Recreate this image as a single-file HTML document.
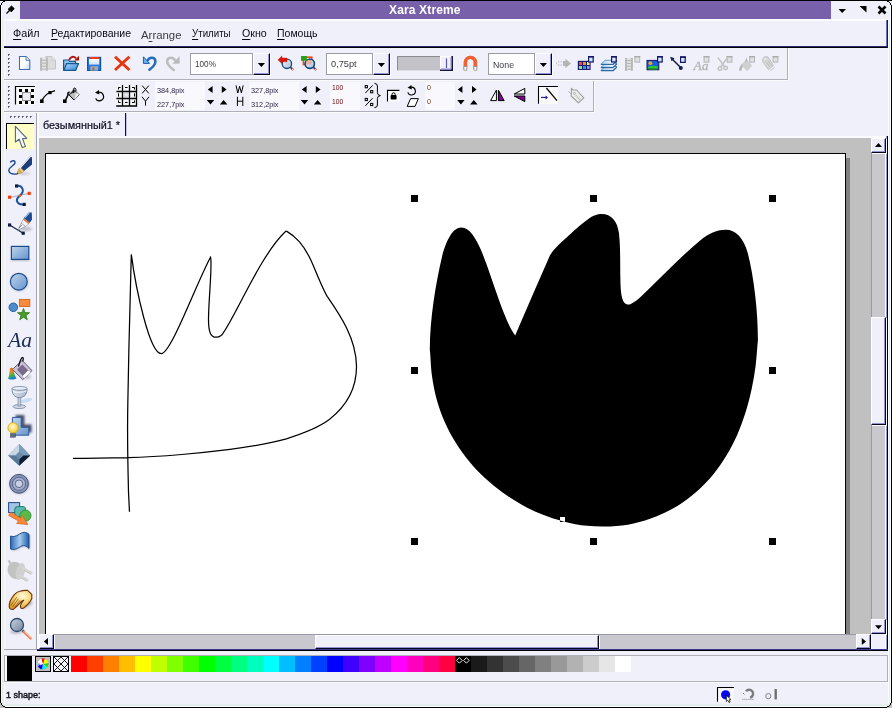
<!DOCTYPE html>
<html><head><meta charset="utf-8">
<style>
*{box-sizing:border-box;margin:0;padding:0}
html,body{width:892px;height:708px;overflow:hidden;background:#f0f0fa;font-family:"Liberation Sans",sans-serif;}
.a{position:absolute}
#win{position:absolute;left:0;top:0;width:892px;height:708px;background:#f0f0fa;overflow:hidden}
.t{position:absolute;white-space:nowrap;color:#000;transform-origin:0 0;line-height:1}
.menu{font-size:11px;top:28px;color:#0a0a14}
.menu u{text-decoration:underline;text-underline-offset:1.5px;text-decoration-thickness:1px}
.f{position:absolute;white-space:nowrap;font-size:7.5px;line-height:1;transform-origin:0 0;color:#2e2244}
svg{position:absolute;overflow:visible}
.cmb{position:absolute;background:#fff;border:1px solid #9c9ca4}
.btn{position:absolute;background:#f0f0fa;border-top:1px solid #fff;border-left:1px solid #fff;border-right:1px solid #06061c;border-bottom:1px solid #06061c;box-shadow:inset -1px -1px 0 #9494d4,1px 1px 0 #fbfbfe}
.gr{position:absolute;width:2px;height:2px;background:#50505a;box-shadow:1px 1px 0 #fff}
.sw{position:absolute;top:656px;width:16px;height:16px}
</style></head><body>
<div id="win">
<!-- FRAME -->
<div class="a" style="left:0;top:0;width:892px;height:1px;background:#000"></div>
<div class="a" style="left:0;top:0;width:1px;height:708px;background:#000"></div>
<div class="a" style="left:891px;top:0;width:1px;height:708px;background:#000"></div>
<div class="a" style="left:0;top:707px;width:892px;height:1px;background:#000"></div>
<div class="a" style="left:1px;top:1px;width:1px;height:706px;background:#f4fcfc"></div>
<div class="a" style="left:2px;top:20px;width:1px;height:686px;background:#e5edec"></div>
<div class="a" style="left:3px;top:20px;width:1px;height:684px;background:#e9f0ef"></div>
<div class="a" style="left:4px;top:20px;width:1px;height:684px;background:#fbfbfe"></div>
<div class="a" style="left:888px;top:20px;width:1px;height:686px;background:#f4fcfc"></div>
<div class="a" style="left:889px;top:20px;width:1px;height:686px;background:#e5edec"></div>
<div class="a" style="left:890px;top:1px;width:1px;height:706px;background:#f4fcfc"></div>
<div class="a" style="left:2px;top:704px;width:887px;height:2px;background:#e5edec"></div>
<div class="a" style="left:1px;top:706px;width:890px;height:1px;background:#f4fcfc"></div>
<svg style="left:0;top:0" width="892" height="708" viewBox="0 0 892 708" shape-rendering="crispEdges">
<rect x="0" y="1" width="1" height="1" fill="#eeeefa"/><rect x="891" y="1" width="1" height="1" fill="#eeeefa"/><rect x="0" y="2" width="1" height="1" fill="#eeeefa"/><rect x="891" y="2" width="1" height="1" fill="#eeeefa"/><rect x="0" y="3" width="1" height="1" fill="#eeeefa"/><rect x="891" y="3" width="1" height="1" fill="#eeeefa"/><rect x="0" y="4" width="1" height="1" fill="#eeeefa"/><rect x="891" y="4" width="1" height="1" fill="#eeeefa"/><rect x="1" y="1" width="1" height="1" fill="#eeeefa"/><rect x="890" y="1" width="1" height="1" fill="#eeeefa"/><rect x="1" y="2" width="1" height="1" fill="#eeeefa"/><rect x="890" y="2" width="1" height="1" fill="#eeeefa"/><rect x="2" y="1" width="1" height="1" fill="#eeeefa"/><rect x="889" y="1" width="1" height="1" fill="#eeeefa"/><rect x="1" y="3" width="1" height="1" fill="#000"/><rect x="890" y="3" width="1" height="1" fill="#000"/><rect x="1" y="4" width="1" height="1" fill="#000"/><rect x="890" y="4" width="1" height="1" fill="#000"/><rect x="2" y="2" width="1" height="1" fill="#000"/><rect x="889" y="2" width="1" height="1" fill="#000"/><rect x="3" y="1" width="1" height="1" fill="#000"/><rect x="888" y="1" width="1" height="1" fill="#000"/><rect x="4" y="1" width="1" height="1" fill="#000"/><rect x="887" y="1" width="1" height="1" fill="#000"/><rect x="0" y="703" width="1" height="1" fill="#c0c0c0"/><rect x="891" y="703" width="1" height="1" fill="#c0c0c0"/><rect x="0" y="704" width="1" height="1" fill="#c0c0c0"/><rect x="891" y="704" width="1" height="1" fill="#c0c0c0"/><rect x="0" y="705" width="1" height="1" fill="#c0c0c0"/><rect x="891" y="705" width="1" height="1" fill="#c0c0c0"/><rect x="0" y="706" width="1" height="1" fill="#c0c0c0"/><rect x="891" y="706" width="1" height="1" fill="#c0c0c0"/><rect x="0" y="707" width="1" height="1" fill="#c0c0c0"/><rect x="891" y="707" width="1" height="1" fill="#c0c0c0"/><rect x="1" y="705" width="1" height="1" fill="#c0c0c0"/><rect x="890" y="705" width="1" height="1" fill="#c0c0c0"/><rect x="1" y="706" width="1" height="1" fill="#c0c0c0"/><rect x="890" y="706" width="1" height="1" fill="#c0c0c0"/><rect x="1" y="707" width="1" height="1" fill="#c0c0c0"/><rect x="890" y="707" width="1" height="1" fill="#c0c0c0"/><rect x="2" y="706" width="1" height="1" fill="#c0c0c0"/><rect x="889" y="706" width="1" height="1" fill="#c0c0c0"/><rect x="2" y="707" width="1" height="1" fill="#c0c0c0"/><rect x="889" y="707" width="1" height="1" fill="#c0c0c0"/><rect x="3" y="707" width="1" height="1" fill="#c0c0c0"/><rect x="888" y="707" width="1" height="1" fill="#c0c0c0"/><rect x="4" y="707" width="1" height="1" fill="#c0c0c0"/><rect x="887" y="707" width="1" height="1" fill="#c0c0c0"/><rect x="1" y="703" width="1" height="1" fill="#000"/><rect x="890" y="703" width="1" height="1" fill="#000"/><rect x="1" y="704" width="1" height="1" fill="#000"/><rect x="890" y="704" width="1" height="1" fill="#000"/><rect x="2" y="705" width="1" height="1" fill="#000"/><rect x="889" y="705" width="1" height="1" fill="#000"/><rect x="3" y="706" width="1" height="1" fill="#000"/><rect x="888" y="706" width="1" height="1" fill="#000"/><rect x="4" y="706" width="1" height="1" fill="#000"/><rect x="887" y="706" width="1" height="1" fill="#000"/>
</svg>
<!-- TITLE -->
<div class="a" style="left:20px;top:1px;width:811px;height:18px;background:#7860aa"></div>
<div class="t" style="left:389px;top:4px;font-size:12px;font-weight:bold;color:#fff;letter-spacing:0.15px">Xara Xtreme</div>
<div class="a" style="left:4px;top:19px;width:884px;height:2px;background:#fbfbfe"></div>
<svg style="left:0;top:0" width="892" height="20">
 <path d="M6.5 13.5 L10 10" stroke="#000" stroke-width="1.3" fill="none"/>
 <path d="M8.2 9.2 L11.5 6 L14.2 8.6 L11.2 12 L10.6 10.4 Z" fill="#000" stroke="#000" stroke-width="1"/>
 <path d="M838.5 9 L846 9 L842.2 13 Z" fill="#000"/>
 <path d="M859.5 6 L866.5 6 L866.5 12.5 Z" fill="#000"/>
 <path d="M878.5 6.5 L885.5 13.5 M885.5 6.5 L878.5 13.5" stroke="#000" stroke-width="2.6" fill="none"/>
</svg>
<!-- MENU -->
<div class="a" style="left:4px;top:46px;width:884px;height:1px;background:#2a2a6a"></div>
<div class="a" style="left:4px;top:47px;width:884px;height:1px;background:#000"></div>
<div class="a" style="left:887px;top:20px;width:1px;height:28px;background:#1a1a40"></div>
<div class="a" style="left:886px;top:20px;width:1px;height:26px;background:#7070c0"></div>
<div class="t menu" style="left:13px;transform:scaleX(0.98)"><u>Ф</u>айл</div>
<div class="t menu" style="left:50.5px;transform:scaleX(0.955)"><u>Р</u>едактирование</div>
<div class="t menu" style="left:141px;top:30px;color:#3c3c44;font-size:11.5px;transform:scaleX(0.99)">A<u>r</u>range</div>
<div class="t menu" style="left:192.3px;transform:scaleX(0.883)"><u>У</u>тилиты</div>
<div class="t menu" style="left:242px;transform:scaleX(0.968)"><u>О</u>кно</div>
<div class="t menu" style="left:277.3px;transform:scaleX(0.955)"><u>П</u>омощь</div>
<!-- TOOLBAR 1 -->
<div class="a" style="left:4px;top:48px;width:784px;height:32px;border-right:1px solid #b0b0b8;border-bottom:1px solid #b0b0b8"></div>
<div class="a" style="left:4px;top:80px;width:784px;height:1px;background:#fbfbfe"></div>
<div class="a" style="left:788px;top:48px;width:1px;height:32px;background:#fbfbfe"></div>
<svg style="left:0;top:0" width="892" height="120" viewBox="0 0 892 120">
<defs>
 <linearGradient id="gdoc" x1="0" y1="0" x2="1" y2="1"><stop offset="0" stop-color="#fff"/><stop offset="0.5" stop-color="#fff"/><stop offset="1" stop-color="#c4dcf6"/></linearGradient>
 <linearGradient id="gfold" x1="0" y1="0" x2="1" y2="1"><stop offset="0" stop-color="#b8dcfa"/><stop offset="1" stop-color="#2a84dc"/></linearGradient>
 <linearGradient id="gsave" x1="0" y1="0" x2="0" y2="1"><stop offset="0" stop-color="#fff"/><stop offset="1" stop-color="#c8e0fa"/></linearGradient>
 <linearGradient id="gmag" x1="0" y1="0" x2="1" y2="1"><stop offset="0" stop-color="#eef2f8"/><stop offset="1" stop-color="#a8c0dc"/></linearGradient>
 <linearGradient id="gmgn" x1="0" y1="0" x2="1" y2="0"><stop offset="0" stop-color="#f4825a"/><stop offset="0.5" stop-color="#f05a28"/><stop offset="1" stop-color="#e04818"/></linearGradient>
</defs>
<!-- grippers -->
<g shape-rendering="crispEdges"><rect x="8" y="54" width="1" height="1" fill="#50505c"/><rect x="9" y="54" width="1" height="1" fill="#80808c"/><rect x="8" y="55" width="1" height="1" fill="#787884"/><rect x="9" y="55" width="1" height="1" fill="#fff"/><rect x="8" y="58" width="1" height="1" fill="#50505c"/><rect x="9" y="58" width="1" height="1" fill="#80808c"/><rect x="8" y="59" width="1" height="1" fill="#787884"/><rect x="9" y="59" width="1" height="1" fill="#fff"/><rect x="8" y="62" width="1" height="1" fill="#50505c"/><rect x="9" y="62" width="1" height="1" fill="#80808c"/><rect x="8" y="63" width="1" height="1" fill="#787884"/><rect x="9" y="63" width="1" height="1" fill="#fff"/><rect x="8" y="66" width="1" height="1" fill="#50505c"/><rect x="9" y="66" width="1" height="1" fill="#80808c"/><rect x="8" y="67" width="1" height="1" fill="#787884"/><rect x="9" y="67" width="1" height="1" fill="#fff"/><rect x="8" y="70" width="1" height="1" fill="#50505c"/><rect x="9" y="70" width="1" height="1" fill="#80808c"/><rect x="8" y="71" width="1" height="1" fill="#787884"/><rect x="9" y="71" width="1" height="1" fill="#fff"/><rect x="8" y="74" width="1" height="1" fill="#50505c"/><rect x="9" y="74" width="1" height="1" fill="#80808c"/><rect x="8" y="75" width="1" height="1" fill="#787884"/><rect x="9" y="75" width="1" height="1" fill="#fff"/></g>
<!-- new -->
<path d="M19.5 56.5 H26 L29.8 60.3 V69.5 H19.5 Z" fill="url(#gdoc)" stroke="#3f72ac" stroke-width="1.1"/>
<path d="M26 56.5 V60.3 H29.8" fill="#e4eefa" stroke="#3f72ac" stroke-width="0.9"/>
<!-- film/doc disabled -->
<path d="M45.8 56.5 H51.8 L55.5 60 V69 H45.8 Z" fill="#dcdcdc" stroke="#c4c4c4" stroke-width="1"/>
<path d="M51.8 56.5 V60 H55.5" fill="#ececec" stroke="#c4c4c4" stroke-width="0.8"/>
<rect x="40.2" y="57.8" width="7.6" height="13" fill="#e2e2e2"/>
<rect x="40.2" y="57.8" width="1.8" height="13" fill="#acacac"/><rect x="46" y="57.8" width="1.8" height="13" fill="#acacac"/>
<g stroke="#a8a8a8" stroke-width="0.8"><path d="M42 60.3H46M42 63.2H46M42 66.1H46M42 69H46"/></g>
<g fill="#d8d8d8"><rect x="40.6" y="58.8" width="1" height="1"/><rect x="40.6" y="61" width="1" height="1"/><rect x="40.6" y="63.2" width="1" height="1"/><rect x="40.6" y="65.4" width="1" height="1"/><rect x="40.6" y="67.6" width="1" height="1"/><rect x="40.6" y="69.6" width="1" height="1"/>
<rect x="46.4" y="58.8" width="1" height="1"/><rect x="46.4" y="61" width="1" height="1"/><rect x="46.4" y="63.2" width="1" height="1"/><rect x="46.4" y="65.4" width="1" height="1"/><rect x="46.4" y="67.6" width="1" height="1"/><rect x="46.4" y="69.6" width="1" height="1"/></g>
<!-- open -->
<path d="M63.6 70.4 V60 H68.5 L69.6 61.4 H75.6 V63.6" fill="#8cc0ee" stroke="#14588c" stroke-width="1.2" stroke-linejoin="round"/>
<path d="M63.8 70.4 L66.6 63.6 H78.6 L75.6 70.4 Z" fill="url(#gfold)" stroke="#14588c" stroke-width="1.2" stroke-linejoin="round"/>
<path d="M69.2 60 C70.4 56.6 73.6 55.8 76 58.2" fill="none" stroke="#b01c14" stroke-width="2"/>
<path d="M74.2 60.6 L79 60.6 L79 55.8 Z" fill="#b01408"/>
<!-- save -->
<rect x="87.6" y="57.4" width="13" height="13" fill="#2a7ae0" stroke="#14569c" stroke-width="1.2"/>
<rect x="89" y="59" width="10.2" height="5.6" fill="url(#gsave)"/>
<rect x="89" y="57" width="10.2" height="2" fill="#ee3a24"/>
<rect x="90.4" y="66.2" width="7.6" height="4.4" fill="#a8a8a8"/>
<rect x="92.4" y="67.4" width="2" height="3.2" fill="#7c7c7c"/>
<!-- delete X -->
<path d="M115 56.8 L129.4 70 M129.4 56.8 L115 70" stroke="#e8340e" stroke-width="2.9" fill="none"/>
<!-- undo -->
<path d="M147.6 60.4 C149.5 56.6 155.6 56.4 155.4 61.8 C155.2 65.4 152.2 67.6 149.4 69.8" fill="none" stroke="#256cbc" stroke-width="2.5" stroke-linecap="round"/>
<path d="M143.4 56.8 V63.4 H149.6 Z" fill="#6cb2f2" stroke="#1c5eac" stroke-width="1" stroke-linejoin="round"/>
<!-- redo -->
<path d="M175 60.4 C173.1 56.6 167 56.4 167.2 61.8 C167.4 65.4 170.4 67.6 173.8 70" fill="none" stroke="#bcbcbc" stroke-width="2.5" stroke-linecap="round"/>
<path d="M179.4 56.6 V63.6 H172.8 Z" fill="#b8b8b8" stroke="#c4c4c4" stroke-width="0.6"/>
<!-- zoom prev -->
<circle cx="286.9" cy="63.8" r="4.7" fill="url(#gmag)" stroke="#1c4878" stroke-width="1.3"/>
<path d="M290.4 67.2 L292.6 69.4" stroke="#1c4878" stroke-width="1.8"/>
<path d="M291.8 68.6 L293.2 70" stroke="#e8402c" stroke-width="2.2"/>
<rect x="292" y="68.9" width="1" height="1" fill="#fff"/>
<path d="M278 59.8 L282 55.9 V58 H287 V61.8 H282 V63.8 Z" fill="#d81808" stroke="#c01408" stroke-width="0.4"/>
<!-- zoom sel -->
<rect x="303.4" y="57.2" width="8.4" height="7.4" fill="#fff" stroke="#f04818" stroke-width="1.6"/>
<circle cx="309.8" cy="63.8" r="4.7" fill="url(#gmag)" stroke="#1c4878" stroke-width="1.3"/>
<path d="M305.6 59.6 H311.6 V64.4 H305.6 Z" fill="#f0a088" opacity="0.75"/>
<circle cx="309.8" cy="63.8" r="4.7" fill="none" stroke="#1c4878" stroke-width="1.3"/>
<rect x="301" y="56" width="5.8" height="4.8" fill="#28a018"/>
<path d="M313.3 67.2 L315.5 69.4" stroke="#1c4878" stroke-width="1.8"/>
<path d="M314.7 68.6 L316.1 70" stroke="#e8402c" stroke-width="2.2"/>
<rect x="314.9" y="68.9" width="1" height="1" fill="#fff"/>
<!-- slider -->
<rect x="397" y="56" width="56" height="14.4" fill="#c2c2c8"/>
<path d="M397.5 70.4 V56.5 H453" fill="none" stroke="#8c8c94" stroke-width="1"/>
<rect x="440" y="56" width="13" height="14.4" fill="#f0f0fa"/>
<path d="M440.5 70 V56.5 H452" fill="none" stroke="#fff" stroke-width="1"/>
<path d="M452.2 56 V70.2 H440" fill="none" stroke="#16163c" stroke-width="1.6"/>
<path d="M451 57 V69 H441" fill="none" stroke="#8a8ad0" stroke-width="1"/>
<path d="M446.5 58.5 V68" stroke="#5858a0" stroke-width="1.2"/>
<!-- magnet -->
<path d="M465.4 69.6 V62.4 A5 5 0 0 1 475.4 62.4 V69.6" fill="none" stroke="url(#gmgn)" stroke-width="3.4"/>
<path d="M465.4 69.6 V62.4 A5 5 0 0 1 475.4 62.4 V69.6" fill="none" stroke="#f06030" stroke-width="3.4"/>
<rect x="464" y="66.6" width="2.8" height="3.6" fill="#fff" stroke="#8c8c8c" stroke-width="0.7"/>
<rect x="474" y="66.6" width="2.8" height="3.6" fill="#fff" stroke="#8c8c8c" stroke-width="0.7"/>
<!-- arrow disabled -->
<path d="M563 61 H565.4 V58.8 L571 63.5 L565.4 68.2 V66 H563 Z" fill="#b4b4b4"/>
<g fill="#c8c8c8"><rect x="560.4" y="61" width="1.6" height="1.4"/><rect x="560.4" y="64.4" width="1.6" height="1.4"/><rect x="558" y="61" width="1.4" height="1.4"/><rect x="558" y="64.4" width="1.4" height="1.4"/><rect x="556" y="62.6" width="1.2" height="1.6"/></g>
</svg>
<!-- combos -->
<div class="cmb" style="left:190px;top:53px;width:63px;height:22px"></div>
<div class="btn" style="left:253px;top:53px;width:17px;height:22px"></div>
<div class="f" style="left:195px;top:61px;font-size:8.2px;color:#3c3c46">100%</div>
<div class="cmb" style="left:326px;top:53px;width:47px;height:22px"></div>
<div class="btn" style="left:373px;top:53px;width:17px;height:22px"></div>
<div class="f" style="left:331px;top:61px;font-size:8.2px;color:#3c3c46;transform:scaleX(1.127)">0,75pt</div>
<div class="cmb" style="left:488px;top:53px;width:47px;height:22px"></div>
<div class="btn" style="left:535px;top:53px;width:17px;height:22px"></div>
<div class="f" style="left:493px;top:61px;font-size:8.4px;color:#3c3c46;transform:scaleX(1.05)">None</div>
<svg style="left:0;top:0" width="892" height="120" viewBox="0 0 892 120">
<path d="M257.8 63 H265 L261.4 67 Z M377.8 63 H385 L381.4 67 Z M539.8 63 H547 L543.4 67 Z" fill="#000"/>
</svg>
<svg style="left:0;top:0" width="892" height="120" viewBox="0 0 892 120">
<defs>
 <linearGradient id="gbox" x1="0" y1="0" x2="1" y2="1"><stop offset="0" stop-color="#fff"/><stop offset="1" stop-color="#a8d0f8"/></linearGradient>
 <linearGradient id="glay2" x1="0" y1="0" x2="1" y2="0"><stop offset="0" stop-color="#a8d4f8"/><stop offset="0.6" stop-color="#e8f4fe"/><stop offset="1" stop-color="#ffffff"/></linearGradient>
 <linearGradient id="glay" x1="0" y1="0" x2="1" y2="0"><stop offset="0" stop-color="#dcecfc"/><stop offset="1" stop-color="#5c9cdc"/></linearGradient>
 <g id="wbox"><rect x="0.6" y="0.6" width="4.6" height="5.4" fill="url(#gbox)" stroke="#16166a" stroke-width="1.2"/><rect x="0" y="0" width="5.8" height="1.6" fill="#16166a"/></g>
 <g id="gbx"><rect x="0.5" y="0.5" width="4.8" height="5.6" fill="#e0e0e0" stroke="#b4b4b4" stroke-width="1"/><rect x="0" y="0" width="5.8" height="1.5" fill="#acacac"/></g>
</defs>
<!-- colour gallery -->
<rect x="577.8" y="60.8" width="12.8" height="9.2" fill="#1c1c6c"/>
<rect x="579" y="62" width="3" height="3" fill="#f04848"/><rect x="583" y="62" width="3" height="3" fill="#f89020"/><rect x="587" y="62" width="2.6" height="3" fill="#f4f080"/>
<rect x="579" y="66" width="3" height="3" fill="#88e888"/><rect x="583" y="66" width="3" height="3" fill="#10a0f8"/><rect x="587" y="66" width="2.6" height="3" fill="#9c8cf0"/>
<use href="#wbox" x="588" y="56"/>
<!-- layer gallery -->
<g stroke-linejoin="round">
<path d="M601 70.4 L605.2 66.5 H617 L613 70.4 Z" fill="url(#glay2)" stroke="#3474b4" stroke-width="0.7"/>
<path d="M600.8 70.7 H613 L616.8 67.1" fill="none" stroke="#2c68a8" stroke-width="1.2"/>
<path d="M601 67.3 L605.2 63.4 H617 L613 67.3 Z" fill="url(#glay2)" stroke="#3474b4" stroke-width="0.7"/>
<path d="M600.8 67.6 H613 L616.8 64.0" fill="none" stroke="#2c68a8" stroke-width="1.2"/>
<path d="M601 64.2 L605.2 60.3 H617 L613 64.2 Z" fill="url(#glay2)" stroke="#3474b4" stroke-width="0.7"/>
<path d="M600.8 64.5 H613 L616.8 60.9" fill="none" stroke="#2c68a8" stroke-width="1.2"/>
</g>
<use href="#wbox" x="611" y="56"/>
<!-- film disabled -->
<rect x="625" y="58" width="7.8" height="12.6" fill="#e2e2e2"/>
<rect x="625" y="58" width="1.8" height="12.6" fill="#acacac"/><rect x="631" y="58" width="1.8" height="12.6" fill="#acacac"/>
<g stroke="#a8a8a8" stroke-width="0.8"><path d="M626.8 60.5H631M626.8 63.4H631M626.8 66.3H631M626.8 69.2H631"/></g>
<g fill="#d8d8d8"><rect x="625.4" y="59" width="1" height="1"/><rect x="625.4" y="61.2" width="1" height="1"/><rect x="625.4" y="63.4" width="1" height="1"/><rect x="625.4" y="65.6" width="1" height="1"/><rect x="625.4" y="67.8" width="1" height="1"/>
<rect x="631.4" y="59" width="1" height="1"/><rect x="631.4" y="61.2" width="1" height="1"/><rect x="631.4" y="63.4" width="1" height="1"/><rect x="631.4" y="65.6" width="1" height="1"/><rect x="631.4" y="67.8" width="1" height="1"/></g>
<use href="#gbx" x="634.4" y="56"/>
<!-- bitmap gallery -->
<rect x="647" y="60.4" width="11.8" height="9.4" fill="#1860d8" stroke="#14146a" stroke-width="1"/>
<ellipse cx="653" cy="67.6" rx="5" ry="1.9" fill="#30c830"/>
<rect x="647.5" y="68.4" width="10.8" height="1.2" fill="#108020"/>
<circle cx="650.4" cy="63.2" r="1.9" fill="#f8a020"/>
<use href="#wbox" x="657" y="56"/>
<!-- line gallery -->
<path d="M671.6 58.4 L680.6 67.6" stroke="#101c54" stroke-width="1.5"/>
<path d="M670.2 56.8 L674.6 58.2 L671.6 61.2 Z" fill="#101c54"/>
<circle cx="680.8" cy="68" r="2" fill="#101c54"/>
<use href="#wbox" x="680" y="56.4"/>
<!-- Aa disabled -->
<text x="693.4" y="70.4" font-family="Liberation Serif" font-style="italic" font-size="13.5" fill="#b4b4b4" stroke="#b4b4b4" stroke-width="0.3">Aa</text>
<use href="#gbx" x="703.6" y="56"/>
<!-- scissors disabled -->
<g stroke="#c0c0c0" fill="none" stroke-width="1.4"><path d="M718 57.6 L724.6 67 M726.4 59 L720.6 67"/><circle cx="720" cy="68.6" r="1.8"/><circle cx="725.6" cy="68" r="1.8"/></g>
<use href="#gbx" x="726.6" y="56"/>
<!-- bucket disabled -->
<path d="M739 70.7 C739.4 67 740.6 65 742.4 63.6 L744 65.4 C742.6 66.6 741.8 68.4 741.6 70.7 Z" fill="#b8b8b8"/>
<path d="M746.3 59.9 L751.8 65.5 L747.2 70.7 L741.6 65 Z" fill="#d0d0d0" stroke="#c4c4c4" stroke-width="0.6"/>
<path d="M745.4 62 L746.2 57.2 L747.4 61" fill="#b0b0b0"/>
<use href="#gbx" x="749.2" y="56"/>
<!-- tag disabled -->
<path d="M770 70.4 L774.4 66.4 L775 67.4 L770.8 71.2 Z" fill="#d0d0d4"/>
<path d="M763 58.4 L764.6 56.6 L768 57 L773.4 65.4 L768.6 69.8 L762.6 61.6 Z" fill="#d8d8d8" stroke="#bcbcbc" stroke-width="0.9" stroke-linejoin="round"/>
<path d="M766 61.6 L770 67.4 M768 60.4 L771.8 66" stroke="#b8b8b8" stroke-width="0.9"/>
<circle cx="765.2" cy="59" r="0.8" fill="#f4f4f4"/>
<use href="#gbx" x="772.6" y="56"/>
</svg>
<!-- TOOLBAR 2 -->
<div class="a" style="left:4px;top:81px;width:590px;height:31px;border-right:1px solid #b0b0b8;border-bottom:1px solid #b0b0b8"></div>
<div class="a" style="left:4px;top:112px;width:591px;height:1px;background:#fbfbfe"></div>
<div class="a" style="left:594px;top:81px;width:1px;height:31px;background:#fbfbfe"></div>
<!-- fields -->
<div class="a" style="left:155px;top:82px;width:50px;height:28px;background:#f9f9fd"></div>
<div class="a" style="left:249px;top:82px;width:50px;height:28px;background:#f9f9fd"></div>
<div class="a" style="left:330px;top:82px;width:30px;height:28px;background:#f9f9fd"></div>
<div class="a" style="left:425px;top:82px;width:30px;height:28px;background:#f9f9fd"></div>
<div class="f" style="left:157px;top:86.5px;transform:scaleX(.97)">384,8pix</div>
<div class="f" style="left:157px;top:100.5px;transform:scaleX(.97)">227,7pix</div>
<div class="f" style="left:251px;top:86.5px;transform:scaleX(.97)">327,8pix</div>
<div class="f" style="left:251px;top:100.5px;transform:scaleX(.97)">312,2pix</div>
<div class="f" style="left:332px;top:85.1px;font-size:7.1px;transform:scaleX(.95);color:#6a0c12">100</div>
<div class="f" style="left:332px;top:98.9px;font-size:7.1px;transform:scaleX(.95);color:#6a0c12">100</div>
<div class="f" style="left:427px;top:85.1px;font-size:7.1px;color:#6a3a10">0</div>
<div class="f" style="left:427px;top:98.9px;font-size:7.1px;color:#6a3a10">0</div>
<svg style="left:0;top:0" width="892" height="120" viewBox="0 0 892 120">
<!-- gripper -->
<g shape-rendering="crispEdges"><rect x="8" y="86" width="1" height="1" fill="#50505c"/><rect x="9" y="86" width="1" height="1" fill="#80808c"/><rect x="8" y="87" width="1" height="1" fill="#787884"/><rect x="9" y="87" width="1" height="1" fill="#fff"/><rect x="8" y="90" width="1" height="1" fill="#50505c"/><rect x="9" y="90" width="1" height="1" fill="#80808c"/><rect x="8" y="91" width="1" height="1" fill="#787884"/><rect x="9" y="91" width="1" height="1" fill="#fff"/><rect x="8" y="94" width="1" height="1" fill="#50505c"/><rect x="9" y="94" width="1" height="1" fill="#80808c"/><rect x="8" y="95" width="1" height="1" fill="#787884"/><rect x="9" y="95" width="1" height="1" fill="#fff"/><rect x="8" y="98" width="1" height="1" fill="#50505c"/><rect x="9" y="98" width="1" height="1" fill="#80808c"/><rect x="8" y="99" width="1" height="1" fill="#787884"/><rect x="9" y="99" width="1" height="1" fill="#fff"/><rect x="8" y="102" width="1" height="1" fill="#50505c"/><rect x="9" y="102" width="1" height="1" fill="#80808c"/><rect x="8" y="103" width="1" height="1" fill="#787884"/><rect x="9" y="103" width="1" height="1" fill="#fff"/><rect x="8" y="106" width="1" height="1" fill="#50505c"/><rect x="9" y="106" width="1" height="1" fill="#80808c"/><rect x="8" y="107" width="1" height="1" fill="#787884"/><rect x="9" y="107" width="1" height="1" fill="#fff"/></g>
<!-- icon1 bounds handles (pressed) -->
<rect x="15" y="86" width="20" height="19" fill="#fafafd"/>
<path d="M15.5 104.5 V86.5 H35" fill="none" stroke="#000" stroke-width="1.2"/>
<rect x="22.5" y="92.5" width="8" height="8" fill="#ececf4" stroke="#8c8c8c" stroke-width="1"/>
<g fill="#000"><rect x="19" y="89" width="3" height="3"/><rect x="25" y="89" width="3" height="3"/><rect x="31" y="89" width="3" height="3"/>
<rect x="19" y="95" width="3" height="3"/><rect x="31" y="95" width="3" height="3"/>
<rect x="19" y="101" width="3" height="3"/><rect x="25" y="101" width="3" height="3"/><rect x="31" y="101" width="3" height="3"/></g>
<!-- icon2 curve -->
<path d="M42 100.6 Q44.6 95 49.6 92.8 L55 90.6" fill="none" stroke="#000" stroke-width="1.2"/>
<rect x="40" y="99.4" width="3.6" height="3.6" fill="#000"/><rect x="48.4" y="91" width="3.2" height="3.2" fill="#000"/>
<!-- icon3 bucket -->
<rect x="63" y="99.4" width="3.6" height="3.6" fill="#000"/>
<path d="M65.6 100 L68 95 Q67.4 92 69.6 92.4" fill="none" stroke="#000" stroke-width="1.6"/>
<path d="M74 89.6 L79 94.8 L74 100 L69 94.8 Z" fill="#c0c0c0" stroke="#000" stroke-width="1"/>
<path d="M74.2 100 L79 94.8 L76.4 92.2 Z" fill="#f0f0f0"/>
<path d="M69.6 94.4 L74 89.8 L76 91.8" fill="#404040" stroke="none"/>
<path d="M73.4 93 V89.4 Q73.6 87.6 75 88 Q76.4 88.6 76 91" fill="none" stroke="#000" stroke-width="0.9"/>
<!-- icon4 rotate -->
<path d="M98.4 92.4 A4.2 4.2 0 1 1 95.6 98.4" fill="none" stroke="#000" stroke-width="1.2"/>
<path d="M95 92.8 L99 90 L99.4 94.6 Z" fill="#000"/>
<!-- icon5 grid -->
<rect x="116.4" y="85" width="20" height="20.4" fill="#f6f6fa"/>
<path d="M136.5 85 V106 H116.2 M122.5 85 V105.6 M129.5 85 V105.6 M116.4 91.5 H136.6 M116.4 98.5 H136.6" fill="none" stroke="#000" stroke-width="1.3"/>
<g fill="none" stroke="#000" stroke-width="1"><path d="M118.5 89.5 V87.5 H120.6 M125 87.5 H127.6 M132 87.5 H134.5 V89.5 M118.5 93.4 V96.6 M134.5 93.4 V96.6 M118.5 100.4 V102.5 H120.6 M125 102.5 H127.6 M132 102.5 H134.5 V100.4"/></g>
<rect x="124.2" y="93" width="4.2" height="4" fill="#e8e8f0" stroke="#b8b8c0" stroke-width="0.6"/>
<!-- X Y W H -->
<g fill="none" stroke="#000" stroke-width="1"><path d="M142.2 85.6 L148.8 93.4 M148.8 85.6 L142.2 93.4"/><path d="M142 96.8 L145.5 101.2 L149 96.8 M145.5 101.2 V105.6"/>
<path d="M236 85.4 L237.8 93 L239.6 86.4 L241.4 93 L243.2 85.4"/><path d="M237.4 96.8 V106 M242.8 96.8 V106 M237.4 101.2 H242.8"/></g>
<!-- arrows -->
<g fill="#000">
<path d="M212.6 86 V93 L207.8 89.5 Z M221.8 86 V93 L226.6 89.5 Z M206.8 100 H214.2 L210.5 104.4 Z M219.8 104.4 H227.4 L223.6 100 Z"/>
<path d="M306.6 86 V93 L301.8 89.5 Z M315.8 86 V93 L320.6 89.5 Z M300.8 100 H308.2 L304.5 104.4 Z M313.8 104.4 H321.4 L317.6 100 Z"/>
<path d="M462.4 86 V93 L457.8 89.5 Z M472 86 V93 L476.6 89.5 Z M457.2 100 H464.6 L460.9 104.4 Z M470 104.4 H477.6 L473.8 100 Z"/>
</g>
<!-- percent + brace -->
<g fill="none" stroke="#000" stroke-width="1"><path d="M365.4 93 L372.6 85.4 M365.4 105.8 L372.6 98.2"/><rect x="365.2" y="85.6" width="2.2" height="2.2"/><rect x="370.6" y="90.6" width="2.2" height="2.2"/><rect x="365.2" y="98.4" width="2.2" height="2.2"/><rect x="370.6" y="103.4" width="2.2" height="2.2"/>
<path d="M374.4 83.4 Q377.4 83.4 377.4 86 V92.6 Q377.4 95.4 380.4 95.6 Q377.4 95.8 377.4 98.6 V105 Q377.4 107.6 374.4 107.6"/></g>
<!-- lock (pressed) -->
<rect x="387" y="90" width="12.6" height="11.6" fill="#fafafd"/>
<path d="M387.5 101.4 V90.4 H399.4" fill="none" stroke="#000" stroke-width="1.1"/>
<rect x="390.6" y="95" width="6" height="4.6" rx="1" fill="#000"/><path d="M392 95.4 V94.4 A1.6 1.6 0 0 1 395.2 94.4 V95.4" fill="none" stroke="#000" stroke-width="1"/>
<!-- rotate small -->
<path d="M411 87.2 A3.9 3.9 0 1 1 407.8 92.4" fill="none" stroke="#000" stroke-width="1.1"/>
<path d="M407.6 87.8 L411.4 85 L411.8 89.4 Z" fill="#000"/>
<!-- shear -->
<path d="M407.2 106.4 L410.6 98.6 H418.4 L415 106.4 Z" fill="#fff" stroke="#000" stroke-width="1"/>
<!-- flip H -->
<path d="M496.4 90.2 V100.6 H490.6 Z" fill="#fff" stroke="#000" stroke-width="1"/>
<path d="M498.4 90.2 V100.6 H504.2 Z" fill="#800090" stroke="#000" stroke-width="1"/>
<!-- flip V -->
<path d="M524.8 88.4 V94 H514.2 Z" fill="#fff" stroke="#000" stroke-width="1"/>
<path d="M524.8 101.6 V96 H514.2 Z" fill="#800090" stroke="#000" stroke-width="1"/>
<!-- pressed btn arrow/line -->
<rect x="538" y="86" width="20" height="18" fill="#fafafd"/>
<path d="M538.5 103.8 V86.5 H558" fill="none" stroke="#000" stroke-width="1.1"/>
<path d="M546.4 88 L557 100.6" stroke="#000" stroke-width="1.2"/>
<path d="M541 97.4 H547" stroke="#1818a0" stroke-width="1.1"/><path d="M545.6 95.4 L548 97.4 L545.6 99.4 Z" fill="#1818a0"/>
<!-- tag disabled -->
<path d="M568.4 91.4 L571 94" stroke="#b0b0b0" stroke-width="0.9"/>
<path d="M571.4 88.2 L573 90 L576.6 90 L583.8 97.8 L578.4 102.8 L571.2 96 Z" fill="#ececec" stroke="#9c9c9c" stroke-width="1.1" stroke-linejoin="round"/>
<path d="M575.8 95.4 L580 99.8" stroke="#b8b8b8" stroke-width="2" stroke-dasharray="1 0.8"/>
<circle cx="574.4" cy="93.4" r="1" fill="#fff" stroke="#9c9c9c" stroke-width="0.8"/>
</svg>
<!-- LEFT TOOLBAR -->
<div class="a" style="left:36px;top:113px;width:1px;height:537px;background:#a4a4ac"></div>
<div class="a" style="left:37px;top:113px;width:2px;height:537px;background:#fbfbfe"></div>
<div class="a" style="left:4px;top:649px;width:33px;height:1px;background:#a4a4ac"></div>
<div class="a" style="left:6px;top:123px;width:28px;height:26px;background:#ffffc6;border-top:1px solid #000;border-left:1px solid #000"></div>
<svg style="left:0;top:0" width="60" height="708" viewBox="0 0 60 708">
<defs>
<linearGradient id="lb" x1="0" y1="0" x2="1" y2="1"><stop offset="0" stop-color="#c0d4ec"/><stop offset="1" stop-color="#6494cc"/></linearGradient>
<linearGradient id="lflag" x1="0" y1="0" x2="1" y2="0"><stop offset="0" stop-color="#2c6cb8"/><stop offset="0.5" stop-color="#a8ccf0"/><stop offset="1" stop-color="#1c5ca8"/></linearGradient>
<radialGradient id="lbulb" cx="0.45" cy="0.4" r="0.6"><stop offset="0" stop-color="#fffce0"/><stop offset="1" stop-color="#f4cc20"/></radialGradient>
<linearGradient id="lhand" x1="0" y1="0" x2="0.6" y2="1"><stop offset="0" stop-color="#fcecb0"/><stop offset="1" stop-color="#dc9c28"/></linearGradient>
<linearGradient id="lzoom" x1="0" y1="0" x2="1" y2="1"><stop offset="0" stop-color="#c8d4e0"/><stop offset="1" stop-color="#7484a0"/></linearGradient>
<linearGradient id="lspill" x1="0" y1="0" x2="0.25" y2="1"><stop offset="0" stop-color="#f86c10"/><stop offset="0.35" stop-color="#f88020"/><stop offset="0.7" stop-color="#40b840"/><stop offset="1" stop-color="#1878d8"/></linearGradient>
<linearGradient id="lglass" x1="0" y1="0" x2="1" y2="0"><stop offset="0" stop-color="#dce4ec"/><stop offset="1" stop-color="#a8b4c8"/></linearGradient>
<filter id="bl" x="-30%" y="-30%" width="160%" height="160%"><feGaussianBlur stdDeviation="0.8"/></filter>
<radialGradient id="lhand2" cx="0.6" cy="0.3" r="0.7"><stop offset="0" stop-color="#fffae4"/><stop offset="0.45" stop-color="#f8dc80"/><stop offset="1" stop-color="#dc9c24"/></radialGradient>
</defs>
<!-- gripper -->
<g shape-rendering="crispEdges"><rect x="10" y="116" width="1" height="1" fill="#50505c"/><rect x="11" y="116" width="1" height="1" fill="#80808c"/><rect x="10" y="117" width="1" height="1" fill="#787884"/><rect x="11" y="117" width="1" height="1" fill="#fff"/><rect x="14" y="116" width="1" height="1" fill="#50505c"/><rect x="15" y="116" width="1" height="1" fill="#80808c"/><rect x="14" y="117" width="1" height="1" fill="#787884"/><rect x="15" y="117" width="1" height="1" fill="#fff"/><rect x="18" y="116" width="1" height="1" fill="#50505c"/><rect x="19" y="116" width="1" height="1" fill="#80808c"/><rect x="18" y="117" width="1" height="1" fill="#787884"/><rect x="19" y="117" width="1" height="1" fill="#fff"/><rect x="22" y="116" width="1" height="1" fill="#50505c"/><rect x="23" y="116" width="1" height="1" fill="#80808c"/><rect x="22" y="117" width="1" height="1" fill="#787884"/><rect x="23" y="117" width="1" height="1" fill="#fff"/><rect x="26" y="116" width="1" height="1" fill="#50505c"/><rect x="27" y="116" width="1" height="1" fill="#80808c"/><rect x="26" y="117" width="1" height="1" fill="#787884"/><rect x="27" y="117" width="1" height="1" fill="#fff"/><rect x="30" y="116" width="1" height="1" fill="#50505c"/><rect x="31" y="116" width="1" height="1" fill="#80808c"/><rect x="30" y="117" width="1" height="1" fill="#787884"/><rect x="31" y="117" width="1" height="1" fill="#fff"/></g>
<!-- selector arrow -->
<path d="M15.4 126.4 V142 L19.2 139.2 L22.2 147.6 L25.4 146.6 L22.6 138.6 L26.8 138.4 Z" fill="#f6f8fa" stroke="#56667c" stroke-width="1.1" stroke-linejoin="round"/>
<!-- freehand -->
<path d="M10.6 162 C12 160 15.6 160.4 15 163 C14.4 165.6 8.6 167 8.8 170.6 C9 173.6 13.4 174.4 16.6 174" fill="none" stroke="#1c4c94" stroke-width="1.4" stroke-linecap="round"/>
<ellipse cx="24" cy="173.6" rx="6" ry="1.4" fill="#c8c8d4" filter="url(#bl)"/>
<path d="M16.8 174.2 L18.6 169.2 L22.2 172.6 Z" fill="#e4b848" stroke="#a87818" stroke-width="0.5"/>
<path d="M18.6 169.2 L30.6 155.4 L32 156.6 L32 164.6 L22.2 172.6 Z" fill="#1c3c7c"/>
<path d="M19.8 168.4 L31 156 L31.8 157" fill="none" stroke="#fff" stroke-width="1.1"/>
<path d="M18.6 169.2 L20.4 167.6 L24 171 L22.2 172.6 Z" fill="#f0d080"/>
<path d="M16.8 174.2 L17.4 172.6 L18.4 173.6 Z" fill="#202020"/>
<!-- shape editor -->
<path d="M9.6 197.4 L29.2 193.4" stroke="#a0a0a8" stroke-width="0.8"/>
<path d="M16.6 186 C22 185 25.6 191 20 195.6 C14 200 17.6 205.4 24.2 204.4" fill="none" stroke="#1c54a0" stroke-width="2"/>
<rect x="15" y="184.4" width="3.2" height="3.2" fill="#101c3c"/><rect x="22.6" y="202.8" width="3.2" height="3.2" fill="#101c3c"/>
<rect x="8" y="195.6" width="3.2" height="3.2" fill="#f83c08"/><rect x="27.6" y="191.8" width="3.2" height="3.2" fill="#f83c08"/>
<rect x="18.8" y="194.6" width="2.2" height="2.2" fill="#f85818"/>
<!-- pen -->
<ellipse cx="26" cy="229" rx="6" ry="2" fill="#c0c0cc" filter="url(#bl)"/>
<path d="M9.6 225 L23.2 233.2" stroke="#101c3c" stroke-width="1.1"/>
<rect x="8" y="223.4" width="3.2" height="3.2" fill="#101c3c"/><rect x="21.6" y="231.6" width="3.2" height="3.2" fill="#101c3c"/>
<path d="M17.8 230.4 L21.4 223 L25.4 226.4 Z" fill="#fff" stroke="#606880" stroke-width="0.6"/>
<path d="M19 228 L22 225" stroke="#404860" stroke-width="0.7"/>
<path d="M21.4 223 L23 219.4 L28.6 224 L25.4 226.4 Z" fill="#f4f4f8" stroke="#8088a0" stroke-width="0.5"/>
<path d="M23 219.4 L23.8 218 L29.8 222.8 L28.6 224 Z" fill="#f07838"/>
<path d="M23.8 218 L28.8 212.4 L31.8 212.6 L32 219.6 L29.8 222.8 Z" fill="#1c4c94"/>
<path d="M25 217.6 L29.4 212.8" stroke="#a8c8f0" stroke-width="1.1"/>
<!-- rectangle -->
<rect x="11.4" y="258.6" width="18" height="2.4" fill="#b8b8c8" filter="url(#bl)"/>
<rect x="11.4" y="246.4" width="17.4" height="13" fill="url(#lb)" stroke="#1c4c8c" stroke-width="1.2"/>
<!-- ellipse -->
<circle cx="19.4" cy="282.4" r="8.6" fill="#b8b8c8" filter="url(#bl)"/>
<circle cx="18.8" cy="281.7" r="8.4" fill="url(#lb)" stroke="#1c4c8c" stroke-width="1.2"/>
<!-- quickshape -->
<rect x="19.4" y="299.4" width="10.4" height="7" fill="#f88c3c" stroke="#d06414" stroke-width="0.9"/>
<circle cx="13.3" cy="307.3" r="4.3" fill="#4c8ccc" stroke="#1c5898" stroke-width="0.9"/>
<path d="M23.5 308.4 L25 312.6 L29.6 312.7 L26 315.4 L27.3 319.8 L23.5 317.2 L19.7 319.8 L21 315.4 L17.4 312.7 L22 312.6 Z" fill="#4c9c2c" stroke="#2c7c1c" stroke-width="0.8" stroke-linejoin="round"/>
<!-- text -->
<text x="8" y="346.6" font-family="Liberation Serif" font-style="italic" font-size="21" fill="#1c2c54" textLength="24" lengthAdjust="spacingAndGlyphs">Aa</text>
<!-- fill -->
<path d="M8 378.4 C9.2 376 9.8 372 9.8 369.2 C9.8 367.2 13 367.2 13.4 369.2 C14 372.6 14.8 376 16.6 378.2 C14.4 380 10 380 8 378.4 Z" fill="url(#lspill)"/>
<ellipse cx="26" cy="377" rx="5" ry="2" fill="#c0c0cc" filter="url(#bl)"/>
<path d="M22.2 360.4 L32 370.6 L22.8 379.6 L12.4 369.4 Z" fill="#cac2d4" stroke="#50506c" stroke-width="0.9" stroke-linejoin="round"/>
<path d="M22.4 364.4 L28.2 370.6 L22.8 376 L17 369.6 Z" fill="#7a6a8c"/>
<path d="M28.2 370.6 L30.4 372.2 L24.2 378.2 L22.8 376 Z" fill="#fff"/>
<path d="M18.6 366 C19.6 362.4 20.6 358.6 22.2 357.6 C23.6 357 23.4 359.4 22.8 361" fill="none" stroke="#101018" stroke-width="1.3" stroke-linecap="round"/>
<!-- transparency glass -->
<ellipse cx="26.4" cy="400.4" rx="6" ry="2" fill="#c4dcf4" transform="rotate(-14 26.4 400.4)"/>
<ellipse cx="19.3" cy="406.6" rx="6.2" ry="2" fill="#d0d8e4" stroke="#7484a4" stroke-width="0.8"/>
<rect x="18" y="397" width="2.8" height="9" fill="#c8d0dc" stroke="#7484a4" stroke-width="0.7"/>
<path d="M12 388.4 C11.8 394 14.6 397.6 19.4 397.6 C24.4 397.6 27.4 394 27 388.4 Z" fill="url(#lglass)" stroke="#7484a4" stroke-width="0.9"/>
<ellipse cx="19.5" cy="388.4" rx="7.5" ry="1.9" fill="#e8ecf4" stroke="#7484a4" stroke-width="0.8"/>
<path d="M13 391.4 C16 392.6 23 392.6 26.4 391" fill="none" stroke="#fff" stroke-width="0.9"/>
<!-- shadow -->
<path d="M15.6 415 H24.4 V424.6 H31.6 V432.4 H15.6 Z" fill="#485068" filter="url(#bl)"/>
<path d="M12.4 417.4 H21.2 V427.3 H28.8 V435.2 H12.4 Z" fill="url(#lb)" stroke="#2c5c9c" stroke-width="1"/>
<rect x="10.4" y="433.6" width="5.2" height="3.6" fill="#5c6c84" stroke="#3c4c64" stroke-width="0.5"/>
<circle cx="13.1" cy="427.8" r="5.2" fill="url(#lbulb)" stroke="#d0a818" stroke-width="0.8"/>
<!-- bevel -->
<path d="M19.3 444 L30.2 455.4 L19.3 465.8 L8.2 455.4 Z" fill="#6c8cac"/>
<path d="M19.3 444 L19.3 451.4 L15.2 455.4 L8.2 455.4 Z" fill="#c8d8e4"/>
<path d="M19.3 444 L30.2 455.4 L23.4 455.4 L19.3 451.4 Z" fill="#7c9cbc"/>
<path d="M8.2 455.4 L15.2 455.4 L19.3 459.6 L19.3 465.8 Z" fill="#587898"/>
<path d="M30.2 455.4 L19.3 465.8 L19.3 459.6 L23.4 455.4 Z" fill="#101c34"/>
<!-- contour -->
<circle cx="19.4" cy="484.4" r="9.8" fill="#b8b8c8" filter="url(#bl)"/>
<circle cx="19" cy="483.8" r="9.4" fill="#8494bc" stroke="#3c4460" stroke-width="0.9"/>
<circle cx="19" cy="483.8" r="6.6" fill="#a4b0d0" stroke="#4c5878" stroke-width="0.8"/>
<circle cx="19" cy="483.8" r="3.8" fill="#c8d0e2" stroke="#4c5878" stroke-width="0.8"/>
<!-- blend -->
<rect x="8.6" y="502.6" width="11" height="10" fill="#a4c4e4" stroke="#1c4c8c" stroke-width="1"/>
<rect x="14.8" y="506.6" width="10.8" height="10" rx="2.6" fill="#5cbab2" stroke="#1c7c78" stroke-width="1"/>
<circle cx="25.4" cy="515.6" r="5.6" fill="#5cb848" stroke="#2c8c2c" stroke-width="0.9"/>
<path d="M8.6 515.4 L11 512.2 L20.6 518.2 L22.4 515.6 L27.8 524.6 L16.6 523.4 L18.6 521 Z" fill="#f8883c" stroke="#d85c14" stroke-width="0.7" stroke-linejoin="round"/>
<!-- mould flag -->
<path d="M11.4 537 C17 539.6 21 533.2 25 533.6 C27.6 533.8 29 535 30 536 V550 C28 548 26 546.6 24 546.6 C20 546.6 17 552 11.4 550 Z" fill="#b4b4c4" filter="url(#bl)"/>
<path d="M10.6 536 C16 538.4 20 532.2 24.4 532.4 C26.6 532.6 28 533.4 29 534.4 V548.4 C27 546.6 25.4 545.4 23.4 545.6 C19.4 546 16.4 551 10.6 549 Z" fill="url(#lflag)" stroke="#1c4c8c" stroke-width="1" stroke-linejoin="round"/>
<!-- plug disabled -->
<path d="M8.6 560.4 L10.6 563.6" stroke="#c0c0c0" stroke-width="2.2" fill="none"/>
<ellipse cx="15.6" cy="570.6" rx="7.8" ry="9" transform="rotate(-30 15.6 570.6)" fill="#c2c2c2"/>
<ellipse cx="20.4" cy="571.4" rx="4.4" ry="8.6" transform="rotate(14 20.4 571.4)" fill="#d0d0d0"/>
<path d="M23.4 568.6 L31.2 573" stroke="#d6d6d6" stroke-width="2.6" stroke-linecap="round"/>
<path d="M19.8 575.8 L27.2 580" stroke="#d6d6d6" stroke-width="2.6" stroke-linecap="round"/>
<path d="M24 570.4 L31 574.4 M20.4 577.6 L27 581.4" stroke="#bcbcbc" stroke-width="0.7"/>
<!-- hand -->
<path d="M22 607.6 L31.6 600.4 L32 604 L24 609 Z" fill="#b0b0c0" filter="url(#bl)"/>
<path d="M27.6 590.4 L31.8 594.4 L31.8 598.8 C30 602.4 26.6 606 23 608.4 C21.8 608.8 20.6 608.2 20.4 607 C20.2 604.6 22 602.2 23.8 600.2 C22.8 600.4 21.8 601 21.2 601.6 C18.6 604.6 15.6 608 13 609.4 C11 609.8 9.4 608.6 9.2 606.6 C9 602.6 11.4 598 14.4 594.6 C16 592.8 18 591.6 19.8 591.2 C22.4 590.4 25 590.2 27.6 590.4 Z" fill="url(#lhand2)" stroke="#6c300c" stroke-width="1.1" stroke-linejoin="round"/>
<path d="M10.8 605.6 L16.8 597.2 M12.6 606.8 L18.4 598.8 M14.6 607.6 L20 600.2" stroke="#7c4414" stroke-width="0.7" fill="none"/>
<!-- zoom -->
<ellipse cx="16" cy="632" rx="6" ry="1.8" fill="#b8b8c8" filter="url(#bl)"/>
<path d="M22.4 630.4 L24 632" stroke="#2c4c6c" stroke-width="2.6"/>
<path d="M24 632 L30.6 638.4" stroke="#f08858" stroke-width="2.6" stroke-linecap="round"/>
<path d="M24.6 631.6 L30.8 637.6" stroke="#fcd4b8" stroke-width="0.8"/>
<circle cx="17" cy="625" r="6.5" fill="url(#lzoom)" stroke="#2c4c6c" stroke-width="1.3"/>
</svg>
<!-- TAB STRIP -->
<div class="t" style="left:43px;top:119.5px;font-size:11px;color:#0c0c20;-webkit-text-stroke:0.2px #0c0c20;transform:scaleX(0.985)">безымянный1 *</div>
<div class="a" style="left:125px;top:113px;width:1px;height:24px;background:#101040"></div>
<div class="a" style="left:126px;top:113px;width:1px;height:24px;background:#9090d0;opacity:.5"></div>
<div class="a" style="left:37px;top:136px;width:850px;height:2px;background:#fbfbfe"></div>
<!-- CANVAS -->
<div id="cv" class="a" style="left:39px;top:138px;width:832px;height:496px;background:#c0c0c0;overflow:hidden">
  <div class="a" style="left:807px;top:20px;width:4px;height:480px;background:#808080"></div>
  <div class="a" style="left:6px;top:15px;width:801px;height:490px;background:#fff;border:1px solid #000"></div>
</div>
<svg style="left:0;top:0" width="892" height="708" viewBox="0 0 892 708">
<!-- line drawing -->
<path d="M129.5 511.8 C128.6 498 128.2 486 128.1 474.3 C127.6 450 127.4 425 127.8 404.8 C128.6 355 130 300 131.3 254.4 C136 290 149.6 353.4 161.2 353.6 C171 353.8 196 284 210.5 257.2 C212.6 262 208.6 300 208.5 319 C208.5 333 211 337.4 216.4 337.2 C220 337 222.4 334.8 223.7 332.2 C238 311 261 255 285 232 C285.7 231.2 286.3 231 286.9 231.4 C292 234.4 296 238 299.5 241.9 C304 247 308 254 311.2 260.8 C314 267 317 275 319.9 281.2 C322.2 286.5 324.6 292 327.2 296.4 C340 315 356 338 356.5 366 C356.8 392 344 408 329.3 419.6 C318 428 302 434 286.4 438.8 C268 444 248 447 230 449.4 C214 451.4 199 453 181.7 454.5 C160 456.3 140 457.3 127.8 457.6 C105 458.1 90 458.3 72.9 458.3" fill="none" stroke="#000" stroke-width="1.25"/>
<!-- blob -->
<path d="M429.8 350 C430.5 354.1 430.8 366.7 431.8 374.8 C432.9 382.9 434.4 391.0 436.5 398.7 C438.6 406.5 441.3 414.1 444.5 421.4 C447.6 428.6 451.4 435.7 455.5 442.3 C459.6 448.9 464.2 455.3 469.1 461.2 C474.0 467.2 479.3 472.8 484.9 478.0 C490.5 483.2 496.4 488.1 502.6 492.6 C508.7 497.0 515.1 501.1 521.8 504.8 C528.4 508.5 535.3 511.8 542.4 514.6 C549.5 517.4 556.8 519.8 564.2 521.7 C571.6 523.6 579.3 525.0 587.0 525.8 C594.6 526.6 602.5 526.8 610.3 526.4 C618.1 526.0 625.9 525.1 633.6 523.4 C641.3 521.8 648.9 519.4 656.2 516.5 C663.5 513.6 670.7 510.0 677.4 505.9 C684.1 501.7 690.6 496.9 696.5 491.7 C702.4 486.5 708.0 480.7 713.0 474.7 C718.0 468.6 722.5 462.1 726.6 455.3 C730.7 448.6 734.2 441.5 737.4 434.4 C740.5 427.2 743.2 419.8 745.6 412.2 C748.0 404.7 749.9 397.0 751.6 389.2 C753.3 381.4 754.6 373.4 755.7 365.2 C756.7 357.0 757.5 344.2 757.9 340.0 C758 312 754 278 748 254 C743.5 237 735 229.6 725.6 229.8 C716 230 708 234 700.4 240.2 C680 257 660 279 640 297.5 C634 302.5 630.5 304.8 628.4 304.6 C622 304.5 620.6 294 620.4 280 C620 265 620.6 248 619 233.6 C617.6 221 611 213.6 600.8 214 C594 214.3 588.5 218.8 585 221.5 C577 227.6 571 233.6 566.9 237.3 C559 244.5 553.5 249.5 549.9 255.4 C538.2 282 527.4 307 515.2 335.5 C509.8 328.4 505.2 316.6 500.2 303.4 C494 286.4 487.8 266.2 481 250 C475.6 237.5 469.2 227.6 461.6 227.5 C452.7 227.4 446.6 240 442.4 255.1 C435.4 285 430 318 429.8 350 Z" fill="#000"/>
<!-- handles -->
<g fill="#000" shape-rendering="crispEdges"><rect x="411" y="195" width="7" height="7"/><rect x="590" y="195" width="7" height="7"/><rect x="769" y="195" width="7" height="7"/><rect x="411" y="367" width="7" height="7"/><rect x="769" y="367" width="7" height="7"/><rect x="411" y="538" width="7" height="7"/><rect x="590" y="538" width="7" height="7"/><rect x="769" y="538" width="7" height="7"/></g>
<rect x="560" y="517" width="5" height="5" fill="#fff" style="mix-blend-mode:difference" shape-rendering="crispEdges"/>
</svg>
<!-- V SCROLL -->
<div class="a" style="left:871px;top:138px;width:14px;height:496px;background:#c8c8ce"></div>
<div class="a" style="left:871px;top:138px;width:1px;height:496px;background:#9898a6"></div>
<div class="a" style="left:885px;top:136px;width:1px;height:514px;background:#fff"></div>
<div class="a" style="left:886px;top:136px;width:1px;height:514px;background:#9494d0"></div>
<div class="a" style="left:887px;top:136px;width:1px;height:515px;background:#000"></div>
<div class="btn" style="left:871px;top:138px;width:15px;height:15px"></div>
<div class="btn" style="left:871px;top:619px;width:15px;height:15px"></div>
<div class="btn" style="left:871px;top:317px;width:15px;height:108px"></div>
<div class="a" style="left:871px;top:634px;width:14px;height:15px;background:#f0f0fa"></div>
<!-- H SCROLL -->
<div class="a" style="left:39px;top:634px;width:832px;height:15px;background:#c8c8ce"></div>
<div class="a" style="left:39px;top:634px;width:832px;height:1px;background:#9898a6"></div>
<div class="btn" style="left:39px;top:634px;width:15px;height:15px"></div>
<div class="btn" style="left:856px;top:634px;width:15px;height:15px"></div>
<div class="btn" style="left:315px;top:635px;width:284px;height:14px"></div>
<div class="a" style="left:37px;top:649px;width:851px;height:1px;background:#3a3a90"></div>
<div class="a" style="left:37px;top:650px;width:851px;height:1px;background:#000"></div>
<svg style="left:0;top:0" width="892" height="708" viewBox="0 0 892 708">
<path d="M875 147 H882 L878.5 143 Z M875 625.2 H882 L878.5 629.2 Z M48 638 V645 L43.8 641.5 Z M861.8 638 V645 L866 641.5 Z" fill="#000"/>
</svg>
<!-- COLOUR BAR -->
<div class="a" style="left:4px;top:655px;width:884px;height:1px;background:#b0b0b8"></div>
<div class="a" style="left:4px;top:655px;width:1px;height:27px;background:#b0b0b8"></div>
<div class="a" style="left:5px;top:656px;width:2px;height:25px;background:#fbfbfe"></div>
<div class="a" style="left:887px;top:655px;width:1px;height:27px;background:#b0b0b8"></div>
<div class="a" style="left:4px;top:681px;width:884px;height:1px;background:#b0b0b8"></div>
<div class="a" style="left:4px;top:682px;width:884px;height:1px;background:#fbfbfe"></div>
<div class="a" style="left:7px;top:656px;width:25px;height:25px;background:#000"></div>
<div class="a" style="left:35px;top:656px;width:16px;height:16px;background:#c0c0c0;border:1px solid #000"></div>
<div class="a" style="left:53px;top:656px;width:16px;height:16px;background:#f4f4fa;border:1px solid #000"></div>
<div class="sw" style="left:71px;background:#ff0000"></div><div class="sw" style="left:87px;background:#ff4000"></div><div class="sw" style="left:103px;background:#ff8000"></div><div class="sw" style="left:119px;background:#ffbf00"></div><div class="sw" style="left:135px;background:#ffff00"></div><div class="sw" style="left:151px;background:#bfff00"></div><div class="sw" style="left:167px;background:#80ff00"></div><div class="sw" style="left:183px;background:#40ff00"></div><div class="sw" style="left:199px;background:#00ff00"></div><div class="sw" style="left:215px;background:#00ff40"></div><div class="sw" style="left:231px;background:#00ff80"></div><div class="sw" style="left:247px;background:#00ffbf"></div><div class="sw" style="left:263px;background:#00ffff"></div><div class="sw" style="left:279px;background:#00bfff"></div><div class="sw" style="left:295px;background:#0080ff"></div><div class="sw" style="left:311px;background:#0040ff"></div><div class="sw" style="left:327px;background:#0000ff"></div><div class="sw" style="left:343px;background:#4000ff"></div><div class="sw" style="left:359px;background:#8000ff"></div><div class="sw" style="left:375px;background:#bf00ff"></div><div class="sw" style="left:391px;background:#ff00ff"></div><div class="sw" style="left:407px;background:#ff00bf"></div><div class="sw" style="left:423px;background:#ff0080"></div><div class="sw" style="left:439px;background:#ff0040"></div><div class="sw" style="left:455px;background:#000000"></div><div class="sw" style="left:471px;background:#1a1a1a"></div><div class="sw" style="left:487px;background:#333333"></div><div class="sw" style="left:503px;background:#4c4c4c"></div><div class="sw" style="left:519px;background:#666666"></div><div class="sw" style="left:535px;background:#808080"></div><div class="sw" style="left:551px;background:#999999"></div><div class="sw" style="left:567px;background:#b2b2b2"></div><div class="sw" style="left:583px;background:#cccccc"></div><div class="sw" style="left:599px;background:#e6e6e6"></div><div class="sw" style="left:615px;background:#ffffff"></div>
<svg style="left:0;top:0" width="892" height="708" viewBox="0 0 892 708">
<!-- colour wheel -->
<g transform="translate(43 664)">
<circle r="5.5" fill="#fff" stroke="#909090" stroke-width="0.7"/>
<path d="M0 0 L-1.4 -5.2 A5.4 5.4 0 0 1 1.6 -5.2 Z" fill="#f81010"/>
<path d="M0 0 L1.6 -5.2 A5.4 5.4 0 0 1 5.3 -1 Z" fill="#f8f800"/>
<path d="M0 0 L5.3 -1 A5.4 5.4 0 0 1 4 3.6 Z" fill="#10e010"/>
<path d="M0 0 L4 3.6 A5.4 5.4 0 0 1 -1 5.3 Z" fill="#00f0f8"/>
<path d="M0 0 L-1 5.3 A5.4 5.4 0 0 1 -5.2 1.4 Z" fill="#0808f0"/>
<path d="M0 0 L-5.2 1.4 A5.4 5.4 0 0 1 -1.4 -5.2 Z" fill="#fff"/>
<path d="M0 0 L-1.4 -5.2 L1.6 -5.2 Z" fill="#f81010"/>
<rect x="-4.6" y="-0.4" width="1.2" height="1.2" fill="#1030f0"/><rect x="-3" y="0.8" width="1.2" height="1.2" fill="#1030f0"/>
</g>
<!-- no colour hatch -->
<g stroke="#000" stroke-width="0.9" fill="none">
<path d="M54 657 L68 671 M68 657 L54 671 M54 664 L61 657 L68 664 L61 671 Z"/>
</g>
<!-- diamonds on black -->
<g stroke="#fff" stroke-width="0.9" fill="none"><path d="M456.6 660.4 L459.4 657.6 L462.2 660.4 L459.4 663.2 Z M463.6 660.4 L466.4 657.6 L469.2 660.4 L466.4 663.2 Z"/></g>
</svg>
<!-- STATUS -->
<div class="t" id="st" style="left:6px;top:690.8px;font-size:8.9px;color:#14141e;-webkit-text-stroke:0.45px #14141e;transform:scaleX(1.01)">1 shape:</div>
<svg style="left:0;top:0" width="892" height="708" viewBox="0 0 892 708">
<rect x="717" y="687" width="17" height="15" fill="#f8f8fc"/>
<path d="M717.5 701.8 V687.5 H734" fill="none" stroke="#000" stroke-width="1.1"/>
<circle cx="725.6" cy="694.8" r="4.6" fill="#0808f0"/>
<path d="M726.4 695.4 V701.6 L727.8 700.2 L729 702.6 L730.2 702 L729.2 699.8 L731 699.6 Z" fill="#fff" stroke="#000" stroke-width="0.7" stroke-linejoin="round"/>
<g stroke="#7c7c80" fill="none"><path d="M746 691.2 A4 4 0 1 1 750 697.6" stroke-width="2.5"/><path d="M742.4 699.4 H754" stroke-width="1" stroke-dasharray="1 1"/><path d="M743 693 L744.4 694.4" stroke-width="1"/></g>
<circle cx="768.3" cy="696.1" r="2.6" fill="none" stroke="#808084" stroke-width="1"/><path d="M775.7 689 V699.4" stroke="#707074" stroke-width="2.4"/>
</svg>
</div>
</body></html>
